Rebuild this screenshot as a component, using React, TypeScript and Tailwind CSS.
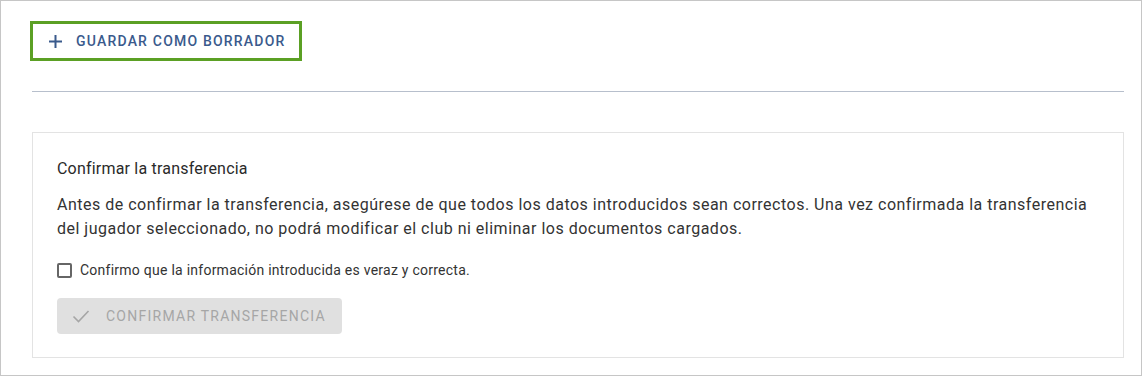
import React from "react";

function PlusIcon() {
  return (
    <svg width="15" height="15" viewBox="0 0 15 15" className="shrink-0">
      <path d="M7.5 1v13M1 7.5h13" stroke="currentColor" strokeWidth="2" fill="none" />
    </svg>
  );
}

function CheckIcon() {
  return (
    <svg width="18" height="18" viewBox="0 0 18 18" className="shrink-0">
      <path d="M1.5 9.5l5 5L16.5 4" stroke="currentColor" strokeWidth="1.6" fill="none" />
    </svg>
  );
}

export default function App() {
  return (
    <div
      className="w-[1142px] h-[376px] border border-[#c6c6c6] bg-white"
      style={{ fontFamily: "Roboto, 'Liberation Sans', sans-serif" }}
    >
      <div className="pl-[31px] pt-[20px] w-[1123px]">
        {/* save draft */}
        <button
          type="button"
          className="-ml-[2px] flex items-center h-[40px] w-[272px] border-[3px] border-[#5ba024] pl-[15px] gap-[13px] text-[#3a5a8c]"
        >
          <PlusIcon />
          <span className="text-[14px] font-medium uppercase tracking-[1.2px]">Guardar como borrador</span>
        </button>

        <div className="mt-[30px] h-px bg-[#b7bfcc]" />

        {/* confirm card */}
        <div className="mt-[40px] border border-[#e3e3e3] px-[24px] pt-[26px] pb-[23px] text-[#333]">
          <h3 className="text-[16px] leading-[20px] font-normal tracking-[0.2px] text-[#2a2a2a]">
            Confirmar la transferencia
          </h3>
          <p className="mt-[14px] text-[16px] leading-[24px] tracking-[0.5px] text-[#333]">
            Antes de confirmar la transferencia, asegúrese de que todos los datos introducidos sean correctos. Una vez
            confirmada la transferencia del jugador seleccionado, no podrá modificar el club ni eliminar los documentos
            cargados.
          </p>

          <label className="mt-[19px] flex items-center h-[20px] gap-[8px]">
            <span className="w-[15px] h-[15px] border-2 border-[#666] rounded-[2px] bg-white" />
            <span className="text-[14px] leading-[20px] tracking-[0.25px] text-[#333]">
              Confirmo que la información introducida es veraz y correcta.
            </span>
          </label>

          <button
            type="button"
            disabled
            className="mt-[18px] flex items-center h-[36px] w-[285px] rounded-[4px] bg-[#e0e0e0] pl-[15px] gap-[16px] text-[#a6a6a6]"
          >
            <CheckIcon />
            <span className="text-[14px] font-normal uppercase tracking-[1.25px]">Confirmar transferencia</span>
          </button>
        </div>
      </div>
    </div>
  );
}
